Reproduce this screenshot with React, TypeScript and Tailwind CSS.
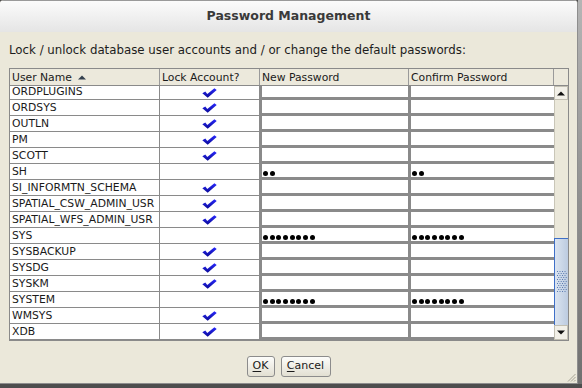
import React from "react";

type Row = { name: string; lock: boolean; pw?: number };

const rows: Row[] = [
  { name: "ORDSYS", lock: true },
  { name: "OUTLN", lock: true },
  { name: "PM", lock: true },
  { name: "SCOTT", lock: true },
  { name: "SH", lock: false, pw: 2 },
  { name: "SI_INFORMTN_SCHEMA", lock: true },
  { name: "SPATIAL_CSW_ADMIN_USR", lock: true },
  { name: "SPATIAL_WFS_ADMIN_USR", lock: true },
  { name: "SYS", lock: false, pw: 8 },
  { name: "SYSBACKUP", lock: true },
  { name: "SYSDG", lock: true },
  { name: "SYSKM", lock: true },
  { name: "SYSTEM", lock: false, pw: 8 },
  { name: "WMSYS", lock: true },
  { name: "XDB", lock: true },
];

const Check = () => (
  <svg width="15" height="10" viewBox="0 0 15 10">
    <defs>
      <linearGradient id="chk" x1="0" y1="0" x2="0" y2="1">
        <stop offset="0" stopColor="#2a2aff" />
        <stop offset="1" stopColor="#0a0a96" />
      </linearGradient>
    </defs>
    <path d="M0.3 5.2 L3.3 3.4 L5.3 6.1 L12.4 0.2 L14.7 1.9 L5.7 9.8 Z" fill="url(#chk)" />
  </svg>
);

const Dots = ({ n }: { n: number }) => (
  <div className="flex h-full items-end gap-[1.7px] pb-px pl-[1px]">
    {Array.from({ length: n }).map((_, i) => (
      <span key={i} className="block h-[5px] w-[5px] rounded-full bg-black" />
    ))}
  </div>
);

const PwCell = ({ w, n, last }: { w: string; n?: number; last?: boolean }) => (
  <div className={`${w} h-full border-b border-[#8a8a8a] ${last ? "" : "border-r"}`}>
    <div className="h-full border-b-2 border-l-2 border-[#8a8a8a] bg-white">{n ? <Dots n={n} /> : null}</div>
  </div>
);

const TableRow = ({ r, h, lh }: { r: Row; h: string; lh: string }) => (
  <div className={`flex ${h}`}>
    <div className={`w-[150px] border-r border-b border-[#8a8a8a] bg-white pl-[2px] ${lh}`}>{r.name}</div>
    <div className="flex w-[100px] items-center justify-center border-r border-b border-[#8a8a8a] bg-white">
      {r.lock ? <Check /> : null}
    </div>
    <PwCell w="w-[149px]" n={r.pw} />
    <PwCell w="w-[145px]" n={r.pw} last />
  </div>
);

export default function App() {
  return (
    <div className="h-[388px] w-[582px] overflow-hidden bg-[#4e4e4e] font-['DejaVu_Sans',sans-serif]">
      <div className="flex h-[384px]">
        <div className="relative flex h-[384px] w-[578px] flex-col overflow-hidden rounded-t-[4px] border-r border-b border-[#8e8e8e] bg-[#ebe8da]">
          {/* title bar */}
          <div className="flex h-[32px] items-center justify-center border-t border-[#9a9a9a] bg-gradient-to-b from-[#fbfbfb] to-[#e5e5e5] text-[12.5px] font-bold text-[#3a3a3a]">
            Password Management
          </div>

          <div className="px-[9px] pt-[11px]">
            <p className="text-[11.8px] leading-[14px] text-[#1c1c1c]">
              Lock / unlock database user accounts and / or change the default passwords:
            </p>

            {/* table */}
            <div className="mt-[11px] h-[273px] w-[560px] border border-[#8a8a8a] text-[10.8px] text-[#1a1a1a]">
              <div className="flex h-[17px] border-b border-[#8a8a8a] bg-[#ece9dc] leading-[17px]">
                <div className="flex w-[150px] items-center gap-[6px] border-r border-[#9a9a9a] pl-[2px]">
                  User Name
                  <svg width="8" height="5" viewBox="0 0 8 5">
                    <path d="M0 4.5 L4 0.5 L8 4.5 Z" fill="#34404e" />
                  </svg>
                </div>
                <div className="w-[100px] border-r border-[#9a9a9a] pl-[2px]">Lock Account?</div>
                <div className="w-[149px] border-r border-[#9a9a9a] pl-[2px]">New Password</div>
                <div className="w-[145px] border-r border-[#9a9a9a] pl-[2px]">Confirm Password</div>
                <div className="w-[14px]" />
              </div>

              <div className="flex h-[254px]">
                <div className="h-[254px] w-[544px]">
                  {/* first row is scrolled partly out of view */}
                  <TableRow r={{ name: "ORDPLUGINS", lock: true }} h="h-[14px]" lh="leading-[12px]" />
                  {rows.map((r) => (
                    <TableRow key={r.name} r={r} h="h-[16px]" lh="leading-[15px]" />
                  ))}
                </div>

                {/* scrollbar */}
                <div className="flex w-[14px] flex-col">
                  <div className="flex h-[14px] items-center justify-center border border-[#c2bfb2] bg-[#f2f0e8]">
                    <svg width="8" height="5" viewBox="0 0 8 5">
                      <path d="M0 4.5 L4 0.5 L8 4.5 Z" fill="#111" />
                    </svg>
                  </div>
                  <div className="h-[138px] border-l border-[#c9c6b8] bg-[#ebe8da]" />
                  <div className="flex h-[87px] items-center justify-center border-t border-l border-[#3e6fc8] bg-gradient-to-r from-[#dbe4f0] to-[#bccbe0]">
                    <svg width="10" height="22" viewBox="0 0 10 22">
                      {Array.from({ length: 11 }).map((_, y) =>
                        Array.from({ length: 4 }).map((__, x) => (
                          <rect key={`${x}-${y}`} x={x * 2.5 + (y % 2 ? 1.2 : 0)} y={y * 2} width="1" height="1" fill="#5a7ab0" />
                        ))
                      )}
                    </svg>
                  </div>
                  <div className="flex h-[15px] items-center justify-center border border-[#c2bfb2] bg-[#f2f0e8]">
                    <svg width="8" height="5" viewBox="0 0 8 5">
                      <path d="M0 0.5 L8 0.5 L4 4.5 Z" fill="#111" />
                    </svg>
                  </div>
                </div>
              </div>
            </div>

            {/* buttons */}
            <div className="mt-[15px] flex justify-center gap-[6px] text-[11px] text-[#1a1a1a]">
              <button className="h-[21px] w-[28px] rounded-[3px] border border-[#8c8c8c] bg-gradient-to-b from-[#fdfdfb] to-[#e2dfd2]">
                <span className="underline underline-offset-2">O</span>K
              </button>
              <button className="h-[21px] w-[50px] rounded-[3px] border border-[#8c8c8c] bg-gradient-to-b from-[#fdfdfb] to-[#e2dfd2]">
                <span className="underline underline-offset-2">C</span>ancel
              </button>
            </div>
          </div>

          {/* resize grip */}
          <svg className="absolute right-[1px] bottom-[1px]" width="9" height="9" viewBox="0 0 9 9">
            <path d="M8.5 1 L1 8.5 M8.5 4 L4 8.5 M8.5 7 L7 8.5" stroke="#a5a293" strokeWidth="1" />
          </svg>
        </div>
        <div className="flex-1 bg-gradient-to-b from-[#b5b5b5] to-[#707070]" />
      </div>
    </div>
  );
}
